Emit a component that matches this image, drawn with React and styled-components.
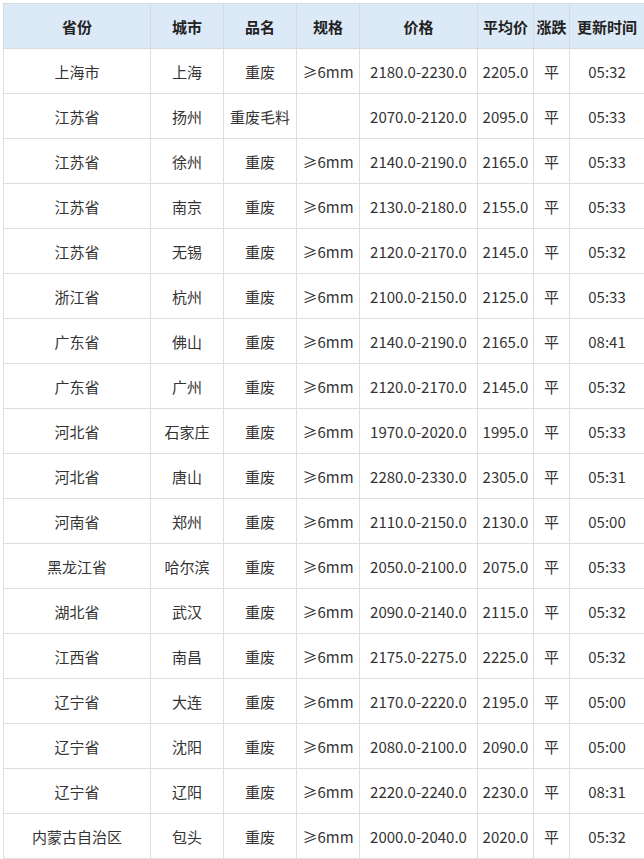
import React from "react";
import styled, { createGlobalStyle } from "styled-components";

const Global = createGlobalStyle`
  html, body { margin: 0; padding: 0; background: #fff; }
  body { padding: 3px 0 0 3px; font-family: "Noto Sans CJK SC", "Noto Sans", sans-serif; color: #333; }
`;

const Table = styled.table`
  border-collapse: collapse;
  table-layout: fixed;
  width: 641px;
  font-size: 15px;
`;

const Th = styled.th`
  background: #dce9f6;
  border: 1px solid #d4dbe3;
  height: 44px;
  padding: 0;
  font-weight: 700;
  color: #222;
  text-align: center;
  white-space: nowrap;
`;

const Td = styled.td`
  border: 1px solid #dedede;
  height: 44px;
  padding: 0;
  text-align: center;
  white-space: nowrap;
  color: #333;
`;

const cols = [147, 73, 73, 63, 118, 56, 36, 75];
const heads = ["省份", "城市", "品名", "规格", "价格", "平均价", "涨跌", "更新时间"];

const rows = [
  ["上海市", "上海", "重废", "≥6mm", "2180.0-2230.0", "2205.0", "平", "05:32"],
  ["江苏省", "扬州", "重废毛料", "", "2070.0-2120.0", "2095.0", "平", "05:33"],
  ["江苏省", "徐州", "重废", "≥6mm", "2140.0-2190.0", "2165.0", "平", "05:33"],
  ["江苏省", "南京", "重废", "≥6mm", "2130.0-2180.0", "2155.0", "平", "05:33"],
  ["江苏省", "无锡", "重废", "≥6mm", "2120.0-2170.0", "2145.0", "平", "05:32"],
  ["浙江省", "杭州", "重废", "≥6mm", "2100.0-2150.0", "2125.0", "平", "05:33"],
  ["广东省", "佛山", "重废", "≥6mm", "2140.0-2190.0", "2165.0", "平", "08:41"],
  ["广东省", "广州", "重废", "≥6mm", "2120.0-2170.0", "2145.0", "平", "05:32"],
  ["河北省", "石家庄", "重废", "≥6mm", "1970.0-2020.0", "1995.0", "平", "05:33"],
  ["河北省", "唐山", "重废", "≥6mm", "2280.0-2330.0", "2305.0", "平", "05:31"],
  ["河南省", "郑州", "重废", "≥6mm", "2110.0-2150.0", "2130.0", "平", "05:00"],
  ["黑龙江省", "哈尔滨", "重废", "≥6mm", "2050.0-2100.0", "2075.0", "平", "05:33"],
  ["湖北省", "武汉", "重废", "≥6mm", "2090.0-2140.0", "2115.0", "平", "05:32"],
  ["江西省", "南昌", "重废", "≥6mm", "2175.0-2275.0", "2225.0", "平", "05:32"],
  ["辽宁省", "大连", "重废", "≥6mm", "2170.0-2220.0", "2195.0", "平", "05:00"],
  ["辽宁省", "沈阳", "重废", "≥6mm", "2080.0-2100.0", "2090.0", "平", "05:00"],
  ["辽宁省", "辽阳", "重废", "≥6mm", "2220.0-2240.0", "2230.0", "平", "08:31"],
  ["内蒙古自治区", "包头", "重废", "≥6mm", "2000.0-2040.0", "2020.0", "平", "05:32"],
];

export default function App() {
  return (
    <>
      <Global />
      <Table>
        <colgroup>
          {cols.map((w, i) => (
            <col key={i} style={{ width: w }} />
          ))}
        </colgroup>
        <thead>
          <tr>
            {heads.map((h) => (
              <Th key={h}>{h}</Th>
            ))}
          </tr>
        </thead>
        <tbody>
          {rows.map((r, i) => (
            <tr key={i}>
              {r.map((c, j) => (
                <Td key={j}>{c}</Td>
              ))}
            </tr>
          ))}
        </tbody>
      </Table>
    </>
  );
}
